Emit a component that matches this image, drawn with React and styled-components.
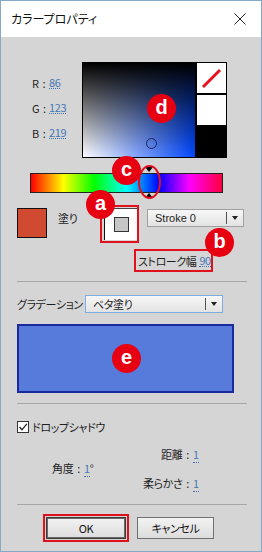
import React from "react";
import styled, { createGlobalStyle } from "styled-components";

// BEGIN STYLING

const GlobalStyle = createGlobalStyle`
  html, body {
    margin: 0;
    padding: 0;
    background: #ffffff;
  }
  body {
    font-family: "Noto Sans CJK JP", "Noto Sans", sans-serif;
  }
  * {
    box-sizing: border-box;
  }
`

const SCWindow = styled.div`
  width: 262px;
  height: 552px;
  border: 1px solid #86aac6;
  background: #d5d5d5;
  display: flex;
  flex-direction: column;
  overflow: hidden;
  color: #1e1e1e;
  font-size: 11px;
  line-height: 14px;
  white-space: nowrap;
  letter-spacing: -0.4px;
  font-feature-settings: "palt" 1;
`
const SCTitleBar = styled.header`
  height: 36px;
  flex: none;
  background: #ffffff;
  display: flex;
  align-items: center;
  justify-content: space-between;
  padding: 0 15px 0 10px;
  font-size: 12px;
  letter-spacing: 0;
  color: #111;
`
const SCBody = styled.main`
  position: relative;
  flex: 1;
  padding: 25px 14px 0 16px;
`
const SCPickerRow = styled.div`
  display: flex;
`
const SCRgbList = styled.div`
  width: 65px;
  padding: 8px 0 0 15px;
`
const SCRgbLine = styled.div`
  height: 25px;
  display: flex;
  align-items: center;
`
const SCRgbKey = styled.span`
  width: 17px;
  letter-spacing: 0;
  word-spacing: 1px;
`
const SCValue = styled.span`
  color: #4677b8;
  border-bottom: 1px dotted #3f6fb0;
  line-height: 12px;
`
const SCFrame = styled.div`
  display: flex;
  gap: 2px;
  height: 96px;
  background: #000;
  border: 1px solid #000;
`
const SCGradient = styled.div`
  position: relative;
  width: 112px;
  height: 94px;
  background:
    linear-gradient(to bottom, #000 0%, rgba(0, 0, 0, 0) 100%),
    linear-gradient(to right, #ffffff 0%, ${props => props.$hueColor} 100%);
`
const SCPickRing = styled.span`
  position: absolute;
  width: 11px;
  height: 11px;
  margin: -5.5px 0 0 -5.5px;
  border: 1.5px solid #1c2858;
  border-radius: 50%;
`
const SCStateColumn = styled.div`
  width: 29px;
  display: flex;
  flex-direction: column;
  gap: 2px;
`
const SCStateCell = styled.div`
  height: 30px;
  background: #ffffff;
  display: flex;
  align-items: center;
  justify-content: center;
`
const SCHueWrap = styled.div`
  position: relative;
  margin: 15px 0 0 13px;
  width: 193px;
  height: 20px;
`
const SCHueBar = styled.div`
  height: 100%;
  border: 1px solid #222;
  background: linear-gradient(to right, #ff0000, #ffff00 17%, #00ff00 33%, #00ffff 50%, #0000ff 67%, #ff00ff 83%, #ff0040);
`
const SCHueArrow = styled.span`
  position: absolute;
  width: 0;
  height: 0;
  margin-left: -4.5px;
  border-left: 4.5px solid transparent;
  border-right: 4.5px solid transparent;
  ${props => props.$up
    ? "bottom: -5px; border-bottom: 5px solid #000;"
    : "top: -6px; border-top: 5px solid #000;"}
`
const SCRing = styled.span`
  position: absolute;
  top: -8px;
  width: 23px;
  height: 34px;
  margin-left: -11.5px;
  border: 2px solid #e0101c;
  border-radius: 50%;
`
const SCFillRow = styled.div`
  display: flex;
  align-items: flex-start;
  margin-top: 15px;
`
const SCSwatch = styled.div`
  width: 30px;
  height: 30px;
  border: 1px solid #111;
  background: ${props => props.$color};
`
const SCFillLabel = styled.span`
  width: 42px;
  margin: 3px 0 0 11px;
`
const SCHighlight = styled.div`
  border: 2px solid #e0101c;
  padding: ${props => props.$pad || "1px"};
  margin: ${props => props.$margin || "0"};
`
const SCFillBox = styled.div`
  width: 33px;
  height: 32px;
  background: #ffffff;
  border-top: 1px solid #444;
  border-left: 1px solid #111;
  display: flex;
  align-items: center;
  justify-content: center;
`
const SCFillChip = styled.div`
  width: 15px;
  height: 15px;
  background: #c6c6c6;
  border: 1px solid #333;
`
const SCSelect = styled.div`
  display: flex;
  align-items: center;
  width: ${props => props.$width}px;
  height: 18px;
  margin: ${props => props.$margin || "0"};
  border: 1px solid ${props => props.$focused ? "#7aaee0" : "#a0a0a0"};
  background: linear-gradient(#f7f7f7, #e3e3e3);
  padding-left: 7px;
`
const SCSelectText = styled.span`
  flex: 1;
  font-family: ${props => props.$latin ? "\"Liberation Sans\", sans-serif" : "inherit"};
  letter-spacing: ${props => props.$latin ? "0" : "inherit"};
`
const SCSelectDivider = styled.span`
  width: 1px;
  height: 12px;
  background: #555;
`
const SCSelectArrow = styled.span`
  width: 16px;
  display: flex;
  justify-content: center;
  &::after {
    content: "";
    border-left: 3.5px solid transparent;
    border-right: 3.5px solid transparent;
    border-top: 4px solid #222;
  }
`
const SCStrokeBox = styled.div`
  display: flex;
  align-items: center;
  gap: 3px;
  width: 79px;
  height: 23px;
  margin: 6px 0 0 117px;
  padding: 0 2px;
  border: 2px solid #e0101c;
`
const SCSeparator = styled.hr`
  margin: ${props => props.$top}px 0 0;
  border: none;
  height: 1px;
  background: #a6a6a6;
`
const SCGradRow = styled.div`
  display: flex;
  align-items: center;
  margin-top: 13px;
`
const SCGradLabel = styled.span`
  width: 68px;
`
const SCBlueBox = styled.div`
  width: 217px;
  height: 69px;
  margin-top: 11px;
  border: 2px solid #1a2a9c;
  background: ${props => props.$color};
`
const SCCheckRow = styled.label`
  display: flex;
  align-items: center;
  gap: 3px;
  margin-top: 16px;
`
const SCCheckbox = styled.span`
  width: 12px;
  height: 12px;
  border: 1px solid #333;
  background: #ffffff;
  display: flex;
  align-items: center;
  justify-content: center;
`
const SCParamGrid = styled.div`
  display: grid;
  grid-template-columns: 63px 62px 47px auto;
  grid-template-rows: 29px 29px;
  align-items: center;
  margin-top: 5px;
`
const SCParamKey = styled.span`
  text-align: right;
  word-spacing: 2px;
  grid-column: ${props => props.$col};
  grid-row: ${props => props.$row};
`
const SCParamValue = styled.span`
  padding-left: 4px;
  grid-column: ${props => props.$col};
  grid-row: ${props => props.$row};
`
const SCButtonRow = styled.div`
  display: flex;
  align-items: center;
  gap: 11px;
  margin-top: 12px;
  padding-left: 29px;
`
const SCButton = styled.button`
  width: ${props => props.$width}px;
  height: 22px;
  padding: 0;
  font: inherit;
  letter-spacing: inherit;
  color: #111;
  background: linear-gradient(#f3f3f3, #dcdcdc);
  border: 1px solid ${props => props.$primary ? "#3a3a3a" : "#707070"};
  box-shadow: ${props => props.$primary ? "inset 0 0 0 1px #6a6a6a" : "none"};
`
const SCBadge = styled.span`
  position: absolute;
  left: ${props => props.$x}px;
  top: ${props => props.$y}px;
  width: 29px;
  height: 29px;
  border-radius: 50%;
  background: #e60012;
  color: #ffffff;
  display: flex;
  align-items: center;
  justify-content: center;
  font: bold 20px "Liberation Sans", sans-serif;
  letter-spacing: 0;
  padding-bottom: 2px;
`

// END STYLING

const COLOR = { r: 86, g: 123, b: 219 };
const FILL = "rgb(208, 74, 50)";

const toHsv = ({ r, g, b }) => {
  const max = Math.max(r, g, b);
  const min = Math.min(r, g, b);
  const d = max - min;
  let h = 0;
  if (d) {
    if (max === r) h = ((g - b) / d) % 6;
    else if (max === g) h = (b - r) / d + 2;
    else h = (r - g) / d + 4;
    h = (h * 60 + 360) % 360;
  }
  return { h, s: max ? d / max : 0, v: max / 255 };
};

const Select = ({ children, width, focused, latin, margin }) => (
  <SCSelect $width={width} $focused={focused} $margin={margin}>
    <SCSelectText $latin={latin}>{children}</SCSelectText>
    <SCSelectDivider />
    <SCSelectArrow />
  </SCSelect>
);

const App = () => {
  const hsv = toHsv(COLOR);
  const hueX = 1 + (hsv.h / 360) * 191;
  const ring = { left: hsv.s * 112, top: hsv.v * 94 };

  return (
    <>
      <GlobalStyle />
      <SCWindow>
        <SCTitleBar>
          <span>カラープロパティ</span>
          <svg width="12" height="12" viewBox="0 0 12 12">
            <path d="M0.5 0.5 L11.5 11.5 M11.5 0.5 L0.5 11.5" stroke="#222" strokeWidth="1" />
          </svg>
        </SCTitleBar>

        <SCBody>
          <SCPickerRow>
            <SCRgbList>
              <SCRgbLine><SCRgbKey>R :</SCRgbKey><SCValue>{COLOR.r}</SCValue></SCRgbLine>
              <SCRgbLine><SCRgbKey>G :</SCRgbKey><SCValue>{COLOR.g}</SCValue></SCRgbLine>
              <SCRgbLine><SCRgbKey>B :</SCRgbKey><SCValue>{COLOR.b}</SCValue></SCRgbLine>
            </SCRgbList>
            <SCFrame>
              <SCGradient $hueColor={`hsl(${hsv.h}, 100%, 50%)`}>
                <SCPickRing style={ring} />
              </SCGradient>
              <SCStateColumn>
                <SCStateCell>
                  <svg width="29" height="30" viewBox="0 0 29 30">
                    <path d="M6 24 L23 7" stroke="#e8101c" strokeWidth="3" />
                  </svg>
                </SCStateCell>
                <SCStateCell />
              </SCStateColumn>
            </SCFrame>
          </SCPickerRow>

          <SCHueWrap>
            <SCHueBar />
            <SCHueArrow style={{ left: hueX }} />
            <SCHueArrow $up style={{ left: hueX }} />
            <SCRing style={{ left: hueX }} />
          </SCHueWrap>

          <SCFillRow>
            <SCSwatch $color={FILL} />
            <SCFillLabel>塗り</SCFillLabel>
            <SCHighlight $pad="1px 0 1px 2px" $margin="-3px 0 0">
              <SCFillBox>
                <SCFillChip />
              </SCFillBox>
            </SCHighlight>
            <Select width={97} latin margin="1px 0 0 8px">Stroke 0</Select>
          </SCFillRow>

          <SCStrokeBox>
            <span>ストローク幅</span>
            <SCValue>90</SCValue>
          </SCStrokeBox>

          <SCSeparator $top={9} />

          <SCGradRow>
            <SCGradLabel>グラデーション</SCGradLabel>
            <Select width={138} focused>ベタ塗り</Select>
          </SCGradRow>

          <SCBlueBox $color={`rgb(${COLOR.r}, ${COLOR.g}, ${COLOR.b})`} />

          <SCSeparator $top={10} />

          <SCCheckRow>
            <SCCheckbox>
              <svg width="10" height="10" viewBox="0 0 10 10">
                <path d="M1.5 5 L4 7.8 L8.8 1.8" fill="none" stroke="#222" strokeWidth="1.3" />
              </svg>
            </SCCheckbox>
            <span>ドロップシャドウ</span>
          </SCCheckRow>

          <SCParamGrid>
            <SCParamKey $col="3" $row="1">距離 :</SCParamKey>
            <SCParamValue $col="4" $row="1"><SCValue>1</SCValue></SCParamValue>
            <SCParamKey $col="1" $row="1 / 3">角度 :</SCParamKey>
            <SCParamValue $col="2" $row="1 / 3"><SCValue>1</SCValue>°</SCParamValue>
            <SCParamKey $col="3" $row="2">柔らかさ :</SCParamKey>
            <SCParamValue $col="4" $row="2"><SCValue>1</SCValue></SCParamValue>
          </SCParamGrid>

          <SCSeparator $top={7} />

          <SCButtonRow>
            <SCHighlight $margin="-3px -3px -3px -3px">
              <SCButton $primary $width={80}>OK</SCButton>
            </SCHighlight>
            <SCButton $width={77}>キャンセル</SCButton>
          </SCButtonRow>

          <SCBadge $x={146} $y={57}>d</SCBadge>
          <SCBadge $x={111} $y={119}>c</SCBadge>
          <SCBadge $x={85} $y={153}>a</SCBadge>
          <SCBadge $x={204} $y={191}>b</SCBadge>
          <SCBadge $x={111} $y={307}>e</SCBadge>
        </SCBody>
      </SCWindow>
    </>
  );
};

export default App;
